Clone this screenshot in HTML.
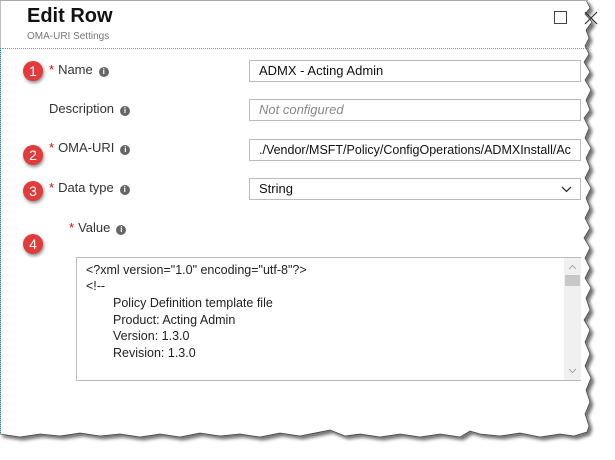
<!DOCTYPE html>
<html><head><style>
body{margin:0;width:615px;height:460px;background:#fff;position:relative;overflow:hidden;font-family:"Liberation Sans",sans-serif;color:#222}
.a{position:absolute;white-space:nowrap}
.lbl{font-size:13px;color:#333}
.st{color:#e00;margin-right:4px}
.i{display:inline-block;width:10px;height:10px;border-radius:50%;background:#666;color:#fff;font-size:8px;line-height:10px;text-align:center;font-weight:bold;margin-left:6px;vertical-align:0px}
.inp{position:absolute;left:249px;width:332px;border:1px solid #bbb;font-size:13px;line-height:20px;padding-left:9px;box-sizing:border-box;height:22px;color:#111}
.b{position:absolute;width:20px;height:20px;border-radius:50%;background:#e23b3b;color:#fff;font-size:14px;line-height:20px;text-align:center;box-shadow:1px 2px 3px rgba(0,0,0,.45)}
.ta{position:absolute;left:76px;top:257px;width:505px;height:124px;border:1px solid #bbb;box-sizing:border-box;font-size:12.5px;color:#222}
.ta div{position:absolute;white-space:nowrap}
</style></head><body>
<svg class="a" style="left:0;top:0" width="615" height="460">
<defs><filter id="s" x="-5%" y="-5%" width="115%" height="115%"><feDropShadow dx="3" dy="3" stdDeviation="1.5" flood-color="#000" flood-opacity=".55"/></filter></defs>
<path filter="url(#s)" fill="#fff" stroke="#444" stroke-width=".7" d="M0 0 L586 0 L590 8 L585 14 L592 22 L586 30 L589 38 L585 46 L589 54 L584 62 L590 72 L585 80 L591 90 L586 100 L590 110 L584 118 L589 128 L585 138 L591 148 L586 158 L590 168 L585 178 L591 188 L586 198 L590 208 L585 218 L590 228 L584 238 L590 248 L585 258 L590 268 L585 278 L591 288 L586 298 L590 310 L584 320 L590 330 L585 342 L590 354 L585 366 L591 378 L586 390 L590 402 L585 414 L589 426 L587 432 L574 436 L560 434 L540 437 L520 433 L500 436 L480 434 L470 431 L460 437 L440 434 L420 437 L400 434 L380 437 L360 434 L345 436 L330 430 L320 432 L300 436 L280 433 L260 437 L240 434 L220 436 L200 433 L180 437 L160 434 L140 437 L120 434 L100 436 L80 433 L60 436 L40 434 L20 437 L0 434 Z"/>
</svg>
<div class="a" style="left:0;top:0;width:588px;height:1px;background:#aaa"></div>
<div class="a" style="left:27px;top:5px;font-size:20px;font-weight:bold;color:#111">Edit Row</div>
<div class="a" style="left:27px;top:31px;font-size:10px;color:#777">OMA-URI Settings</div>
<div class="a" style="left:2px;top:48px;width:584px;border-top:1px dotted #2bb0e8"></div>
<div class="a" style="left:0;top:48px;height:385px;border-left:1px dotted #2a8aa8"></div>
<div class="a" style="left:554px;top:11px;width:11px;height:11px;border:1px solid #444"></div>
<svg class="a" style="left:584px;top:11px" width="14" height="14"><path d="M1 1 L13 13 M13 1 L1 13" stroke="#333" stroke-width="1.2"/></svg>

<div class="b" style="left:23px;top:61px">1</div>
<div class="b" style="left:23px;top:145px">2</div>
<div class="b" style="left:23px;top:181px">3</div>
<div class="b" style="left:23px;top:234px">4</div>

<div class="a lbl" style="left:49px;top:62px"><span class="st">*</span>Name<span class="i">i</span></div>
<div class="a lbl" style="left:49px;top:101px">Description<span class="i">i</span></div>
<div class="a lbl" style="left:49px;top:140px"><span class="st">*</span>OMA-URI<span class="i">i</span></div>
<div class="a lbl" style="left:49px;top:180px"><span class="st">*</span>Data type<span class="i">i</span></div>
<div class="a lbl" style="left:69px;top:220px"><span class="st">*</span>Value<span class="i">i</span></div>

<div class="inp" style="top:60px">ADMX - Acting Admin</div>
<div class="inp" style="top:99px;color:#888;font-style:italic">Not configured</div>
<div class="inp" style="top:139px;overflow:hidden;font-size:12.5px">./Vendor/MSFT/Policy/ConfigOperations/ADMXInstall/Ac</div>
<div class="inp" style="top:178px">String<svg style="position:absolute;right:8px;top:7px" width="11" height="7"><path d="M1 1 L5.5 5.5 L10 1" fill="none" stroke="#333" stroke-width="1.3"/></svg></div>

<div class="ta">
<div style="left:9px;top:5px">&lt;?xml version="1.0" encoding="utf-8"?&gt;</div>
<div style="left:9px;top:21px">&lt;!--</div>
<div style="left:36px;top:38px">Policy Definition template file</div>
<div style="left:36px;top:55px">Product: Acting Admin</div>
<div style="left:36px;top:71px">Version: 1.3.0</div>
<div style="left:36px;top:88px">Revision: 1.3.0</div>
<div style="left:487px;top:0;width:17px;height:122px;background:#f0f0f0"></div>
<div style="left:488px;top:17px;width:15px;height:11px;background:#c8c8c8"></div>
<svg style="position:absolute;left:491px;top:6px" width="9" height="6"><path d="M1 5 L4.5 1.5 L8 5" fill="none" stroke="#aaa"/></svg>
<svg style="position:absolute;left:491px;top:110px" width="9" height="6"><path d="M1 1 L4.5 4.5 L8 1" fill="none" stroke="#aaa"/></svg>
</div>
</body></html>
